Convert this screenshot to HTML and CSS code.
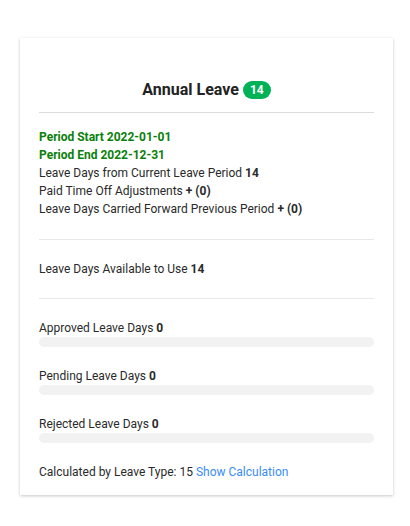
FILE: index.html
```html
<!DOCTYPE html>
<html>
<head>
<meta charset="utf-8">
<link rel="stylesheet" href="styles.css">
</head>
<body>
<div class="card">
  <div class="card-header">
    <h3 class="title">Annual Leave <span class="badge">14</span></h3>
  </div>
  <div class="section period">
    <div class="green">Period Start 2022-01-01</div>
    <div class="green">Period End 2022-12-31</div>
    <div>Leave Days from Current Leave Period <b>14</b></div>
    <div>Paid Time Off Adjustments <b>+ (0)</b></div>
    <div>Leave Days Carried Forward Previous Period <b>+ (0)</b></div>
  </div>
  <div class="section">
    <div>Leave Days Available to Use <b>14</b></div>
  </div>
  <div class="section last">
    <div class="stat">
      <div>Approved Leave Days <b>0</b></div>
      <div class="bar"></div>
    </div>
    <div class="stat">
      <div>Pending Leave Days <b>0</b></div>
      <div class="bar"></div>
    </div>
    <div class="stat">
      <div>Rejected Leave Days <b>0</b></div>
      <div class="bar"></div>
    </div>
    <div class="calc">Calculated by Leave Type: 15 <a href="#" class="link">Show Calculation</a></div>
  </div>
</div>
</body>
</html>
```

FILE: styles.css
```css
html, body {
  margin: 0;
  padding: 0;
  background: #fff;
}
body {
  padding: 38px 17px 20px 20px;
  font-family: Roboto, "Liberation Sans", sans-serif;
  font-size: 12px;
  line-height: 18px;
  color: #2a2a2a;
}
.card {
  width: 373px;
  box-sizing: border-box;
  padding: 0 19px 14px;
  background: #fff;
  box-shadow: 0 1px 3px rgba(0, 0, 0, 0.22);
}
.card-header {
  padding: 40px 0 10px;
  border-bottom: 1px solid #dcdcdc;
  text-align: center;
}
.title {
  margin: 0;
  font-size: 16px;
  line-height: 24px;
  font-weight: 700;
  color: #222;
}
.badge {
  display: inline-block;
  vertical-align: 1px;
  background: #00b257;
  color: #fff;
  font-size: 12px;
  line-height: 18px;
  height: 18px;
  padding: 0 7px;
  border-radius: 9px;
  font-weight: 700;
}
.section {
  padding: 15px 0 21px;
  border-bottom: 1px solid #e8e8e8;
}
.section + .section {
  padding: 20px 0 20px;
}
.section.last {
  border-bottom: none;
  padding-bottom: 0;
}
b {
  font-weight: 700;
}
.green {
  color: #0a800a;
  font-weight: 700;
}
.stat {
  margin-bottom: 20px;
}
.bar {
  height: 10px;
  border-radius: 5px;
  background: #f2f2f2;
}
.link {
  color: #3a8cf5;
  text-decoration: none;
}
```
